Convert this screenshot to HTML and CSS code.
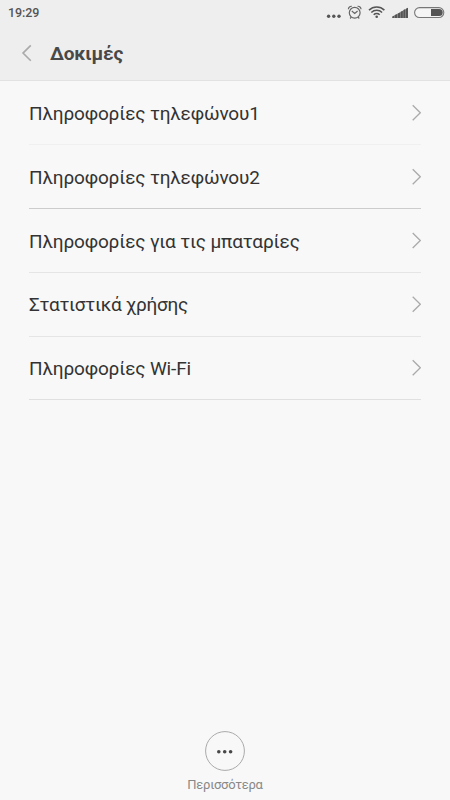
FILE: index.html
```html
<!DOCTYPE html>
<html lang="el">
<head>
<meta charset="utf-8">
<title>Δοκιμές</title>
<link rel="stylesheet" href="styles.css">
</head>
<body>
<header class="header">
  <div class="status">
    <span class="time">19:29</span>
    <svg class="status-icons" width="124" height="24" viewBox="0 0 124 24">
      <g fill="#555">
        <circle cx="2.6" cy="16.2" r="1.7"/><circle cx="7.8" cy="16.2" r="1.7"/><circle cx="13" cy="16.2" r="1.7"/>
      </g>
      <g fill="none" stroke="#666" stroke-width="1.2">
        <circle cx="28.7" cy="12.8" r="5.4"/>
        <path d="M25.8 11l2.9 2.4 2.9-2.4M22.4 9.3a3 3 0 0 1 3.4-3M35 9.3a3 3 0 0 0-3.4-3M25.3 17.2l-1.2 1.3M32.1 17.2l1.2 1.3"/>
      </g>
      <g fill="none" stroke="#555" stroke-width="1.5">
        <path d="M43 10.1a10.9 10.9 0 0 1 15.4 0M45.3 12.5a7.6 7.6 0 0 1 10.8 0M47.7 14.8a4.3 4.3 0 0 1 6 0"/>
      </g>
      <circle cx="50.7" cy="16.7" r="1.3" fill="#555"/>
      <path fill="#999" d="M68 18v-2.4L82 8v10z"/>
      <path fill="#555" d="M66.2 16.6l2.2-1v2.4h-2.2zM69 15l2.2-1v4H69zM71.9 13.4l2.2-1v5.6h-2.2zM74.7 11.7l2.1-1v7.3h-2.1zM77.4 10.1l1.9-1v8.9h-1.9zM79.9 8.7l2.1-1v10.3h-2.1z"/>
      <rect x="88.6" y="7.6" width="29.2" height="9.9" rx="4.9" fill="#f5f5f5" stroke="#777" stroke-width="1.1"/>
      <path fill="#555" d="M105 9h8.2a3.5 3.5 0 0 1 0 7H105z"/>
    </svg>
  </div>
  <div class="title-bar">
    <svg class="back" width="12" height="18" viewBox="0 0 12 18"><path d="M9.8 1.4L2 9.1l7.8 7.7"/></svg>
    <h1 class="title">Δοκιμές</h1>
  </div>
</header>
<main class="list">
  <div class="row faint"><span>Πληροφορίες τηλεφώνου1</span><svg class="chevron" width="10" height="18" viewBox="0 0 10 18"><path d="M1.7 1.2L9.3 8.7l-7.6 7.5"/></svg></div>
  <div class="row strong"><span>Πληροφορίες τηλεφώνου2</span><svg class="chevron" width="10" height="18" viewBox="0 0 10 18"><path d="M1.7 1.2L9.3 8.7l-7.6 7.5"/></svg></div>
  <div class="row"><span>Πληροφορίες για τις μπαταρίες</span><svg class="chevron" width="10" height="18" viewBox="0 0 10 18"><path d="M1.7 1L9.3 8.5l-7.6 7.5"/></svg></div>
  <div class="row usage"><span>Στατιστικά χρήσης</span><svg class="chevron" width="10" height="18" viewBox="0 0 10 18"><path d="M1.7 .8L9.3 8.3l-7.6 7.5"/></svg></div>
  <div class="row last"><span>Πληροφορίες Wi-Fi</span><svg class="chevron" width="10" height="18" viewBox="0 0 10 18"><path d="M1.7 1.2L9.3 8.7l-7.6 7.5"/></svg></div>
</main>
<footer class="more">
  <svg width="42" height="42" viewBox="0 0 42 42">
    <circle cx="21" cy="21" r="19.4" fill="none" stroke="#aaa" stroke-width="1"/>
    <g fill="#484848"><circle cx="14.8" cy="21.8" r="1.8"/><circle cx="20.7" cy="21.8" r="1.8"/><circle cx="26.6" cy="21.8" r="1.8"/></g>
  </svg>
  <span class="more-label">Περισσότερα</span>
</footer>
</body>
</html>
```
FILE: styles.css
```css
* { box-sizing: border-box; }
body {
  margin: 0;
  height: 800px;
  display: flex;
  flex-direction: column;
  background: #f8f8f8;
  font-family: Roboto, sans-serif;
  color: #333;
}
.header {
  height: 81px;
  background: #eee;
  border-bottom: 1px solid #e2e2e2;
}
.status {
  height: 25px;
  padding: 0 6px 0 8px;
  display: flex;
  justify-content: space-between;
}
.status-icons { margin-right: -6px; }
.time {
  font-size: 12.5px;
  font-weight: 500;
  line-height: 26px;
  letter-spacing: -0.1px;
  color: #555;
}
.title-bar {
  height: 56px;
  padding-left: 21px;
  display: flex;
  align-items: center;
  gap: 17px;
}
.back path, .chevron path {
  fill: none;
  stroke: #aaa;
  stroke-width: 1.3;
}
.back path { stroke-width: 1.6; }
.title {
  margin: 0;
  padding-top: 2px;
  font-size: 19px;
  font-weight: 700;
  line-height: 24px;
  letter-spacing: -0.15px;
  color: #484848;
}
.list { padding: 0 29px; }
.row {
  height: 64px;
  display: flex;
  align-items: center;
  justify-content: space-between;
  border-bottom: 1px solid #e5e5e5;
  font-size: 19px;
  letter-spacing: -0.16px;
}
.row span { padding-top: 2px; }
.row.usage { letter-spacing: -0.3px; }
.row.usage span, .row.last span { padding-top: 0; }
.row.faint { border-bottom-color: #f0f0f0; }
.row.strong { border-bottom-color: #ccc; }
.row.last { height: 63px; border-bottom-color: #e0e0e0; }
.more {
  margin-top: auto;
  height: 70px;
  display: flex;
  flex-direction: column;
  align-items: center;
}
.more-label {
  font-size: 13px;
  line-height: 16px;
  margin-top: 5px;
  letter-spacing: -0.27px;
  color: #888;
}
```
